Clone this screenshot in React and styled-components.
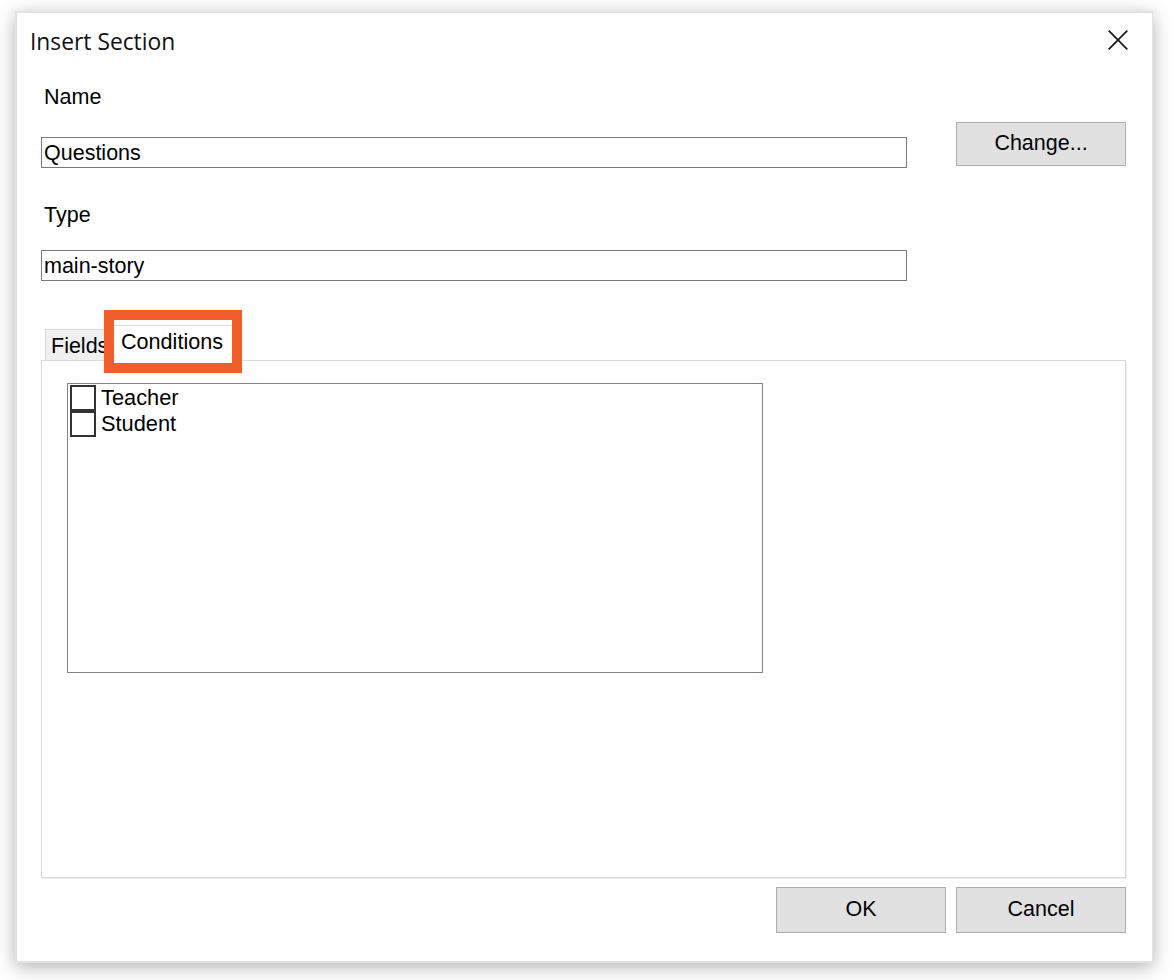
import React from "react";
import styled, { createGlobalStyle } from "styled-components";

const Global = createGlobalStyle`
  html, body { margin: 0; padding: 0; background: #fff; }
  * { box-sizing: border-box; }
`;
const Page = styled.div`
  width: 1172px; height: 980px; padding: 11px 19px 17px 15px; overflow: hidden;
  font-family: "Liberation Sans", Arial, sans-serif; color: #000; background: #fff;
`;
const Dialog = styled.div`
  width: 1138px; height: 952px; background: #fff; border: 2px solid #e2e2e2; border-right-width: 1px;
  box-shadow: 0 4px 18px rgba(0,0,0,.3);
  padding: 0 26px 0 24px;
`;
const TitleBar = styled.div`
  height: 58px; display: flex; align-items: center; justify-content: space-between; margin-left: -11px;
  margin-right: -3px; padding-bottom: 2px;
`;
const Title = styled.h1`
  margin: 0; font: 400 22.8px "Open Sans", "Noto Sans", sans-serif; color: #111;
`;
const CloseButton = styled.button`
  border: 0; background: none; padding: 0; width: 20px; height: 20px; display: block;
  margin-top: -2px; margin-right: 1px;
  svg { display: block; }
`;
const FormGrid = styled.div`
  display: grid; grid-template-columns: 866px 170px; column-gap: 49px; margin-top: 14px;
`;
const Field = styled.div`
  display: flex; flex-direction: column; margin-bottom: 35px;
  &:last-of-type { margin-bottom: 0; }
`;
const Label = styled.label`
  height: 24px; line-height: 24px; font-size: 21.5px; padding-left: 3px; margin-bottom: ${p => p.$gap}px;
`;
const Input = styled.div`
  height: 31px; border: 1px solid #7a7a7a; font-size: 21.5px; line-height: 31px; padding-left: 2px;
`;
const Button = styled.button`
  width: 170px; height: ${p => p.$h}px; background: #e1e1e1; border: 1px solid #adadad; border-radius: 0;
  font: 400 21.5px "Liberation Sans", Arial, sans-serif; color: #000; padding: 0 0 2px;
`;
const SideButton = styled(Button)`
  margin-top: 37px;
`;
const Tabs = styled.div`
  display: flex; align-items: flex-end; margin-top: 44px; padding-left: 4px; height: 35px;
  position: relative; z-index: 1;
`;
const Tab = styled.div`
  height: 31px; width: 69px; background: #f0f0f0; border: 1px solid #d9d9d9; border-bottom: 0;
  font-size: 21.5px; line-height: 32px; padding-left: 5px; white-space: nowrap; overflow: hidden;
`;
const ActiveTab = styled.div`
  position: relative; width: 118px; height: 38px; margin-bottom: -3px; background: #fff;
  border-top: 1px solid #d9d9d9; font-size: 21.6px; line-height: 31px; padding-left: 7px; white-space: nowrap;
  &::after {
    content: ""; position: absolute; left: -10px; right: -10px; top: -16px; bottom: -10px;
    border: 10px solid #f15d2b;
  }
`;
const Panel = styled.div`
  height: 518px; border: 1px solid #d9d9d9; padding: 22px 25px; box-shadow: 1px 1px 0 #eee;
`;
const ListBox = styled.div`
  width: 696px; height: 290px; border: 1px solid #82828a; padding: 1px 2px;
`;
const Row = styled.div`
  height: 26px; display: flex; align-items: center; gap: 5px; font-size: 21.8px;
`;
const Box = styled.span`
  width: 26px; height: 26px; border: 2px solid #333; display: block; flex: none;
`;
const Footer = styled.div`
  display: flex; justify-content: flex-end; gap: 10px; margin-top: 9px;
`;

export default function App() {
  return (
    <Page>
      <Global />
      <Dialog>
        <TitleBar>
          <Title>Insert Section</Title>
          <CloseButton aria-label="Close">
            <svg width="20" height="20" viewBox="0 0 20 20"><path d="M.7.7l18.6 18.6M19.3.7L.7 19.3" stroke="#1a1a1a" strokeWidth="1.7" fill="none" /></svg>
          </CloseButton>
        </TitleBar>
        <FormGrid>
          <div>
            <Field>
              <Label $gap={28}>Name</Label>
              <Input>Questions</Input>
            </Field>
            <Field>
              <Label $gap={23}>Type</Label>
              <Input>main-story</Input>
            </Field>
          </div>
          <SideButton $h={44}>Change...</SideButton>
        </FormGrid>
        <Tabs>
          <Tab>Fields</Tab>
          <ActiveTab>Conditions</ActiveTab>
        </Tabs>
        <Panel>
          <ListBox>
            <Row><Box />Teacher</Row>
            <Row><Box />Student</Row>
          </ListBox>
        </Panel>
        <Footer>
          <Button $h={46}>OK</Button>
          <Button $h={46}>Cancel</Button>
        </Footer>
      </Dialog>
    </Page>
  );
}
